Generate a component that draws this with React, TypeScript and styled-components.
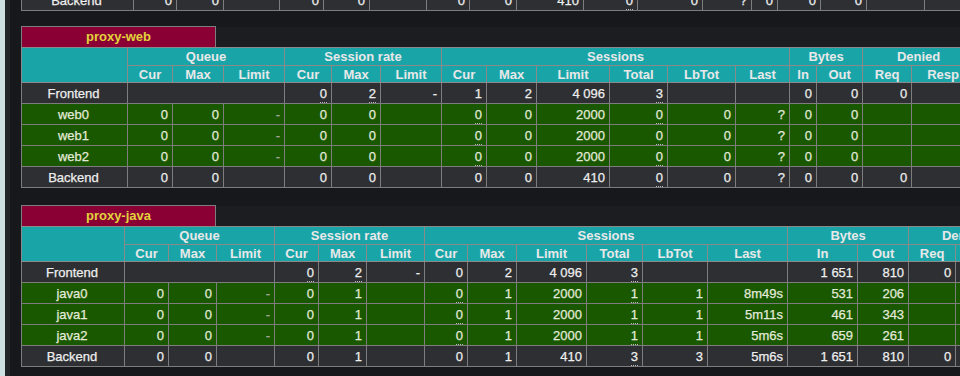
import React from "react";
import styled, { createGlobalStyle } from "styled-components";

const GlobalStyle = createGlobalStyle`
  html, body {
    margin: 0;
    padding: 0;
    background: #17181b;
    overflow: hidden;
  }
  body {
    font-family: "Liberation Sans", Arial, Helvetica, sans-serif;
  }
`;

const Page = styled.div`
  display: flex;
  width: 960px;
  height: 376px;
  overflow: hidden;
`;

const SideStrip = styled.div`
  flex: none;
  width: 5px;
  background: #cfe0e3;
`;

const SideEdge = styled.div`
  flex: none;
  width: 5px;
  background: #232427;
`;

const Content = styled.div`
  flex: 1;
  min-width: 0;
  padding-left: 11px;
  overflow: hidden;
  display: flex;
  flex-direction: column;
`;

const Clip = styled.div`
  height: 11px;
  overflow: hidden;
  display: flex;
  flex-direction: column;
  justify-content: flex-end;
  flex: none;
`;

const Block = styled.section<{ $gap: number }>`
  margin-top: ${({ $gap }) => $gap}px;
  flex: none;
`;

const TitleRow = styled.div`
  display: flex;
  height: 21px;
  width: 2000px;
`;

const Tab = styled.div`
  flex: none;
  width: 195px;
  box-sizing: border-box;
  background: #8a0034;
  border: 1px solid #7d7d7d;
  border-bottom: none;
  color: #e2d23c;
  font-weight: bold;
  font-size: 13px;
  line-height: 20px;
  text-align: center;
`;

const TabFiller = styled.div`
  flex: 1;
  background: #1c1d20;
  margin-top: 1px;
`;

const Table = styled.table`
  border-collapse: collapse;
  table-layout: fixed;
  font-size: 13px;
  border: 1px solid #7d7d7d;
`;

const Th = styled.th<{ $h: number }>`
  background: #19a5a8;
  color: #e8e8e8;
  font-weight: bold;
  font-size: 13px;
  height: ${({ $h }) => $h}px;
  padding: 0;
  border: 1px solid #8a8a8a;
  text-align: center;
  white-space: nowrap;
  overflow: hidden;
`;

const Tr = styled.tr<{ $kind: "front" | "server" | "back" }>`
  height: 21px;
  background: ${({ $kind }) => ($kind === "server" ? "#1a5800" : "#2d2f32")};
  color: ${({ $kind }) => ($kind === "server" ? "#e2ead9" : "#eeeeee")};
`;

const Td = styled.td<{ $name?: boolean; $dim?: boolean }>`
  padding: 0 4px 0 2px;
  border: 1px solid #7d7d7d;
  text-align: ${({ $name }) => ($name ? "center" : "right")};
  white-space: nowrap;
  overflow: hidden;
  -webkit-text-stroke: 0.25px currentColor;
  color: ${({ $dim }) => ($dim ? "#a3a89f" : "inherit")};
`;

const Tip = styled.u`
  text-decoration: none;
  border-bottom: 1px dotted #b9b9b9;
  padding-bottom: 1px;
`;

type Cell = string | { v: string; tip?: boolean; span?: number; dim?: boolean };
type Row = { kind: "front" | "server" | "back"; name: string; cells: Cell[] };

const t = (v: string): Cell => ({ v, tip: true });
const sp = (n: number): Cell => ({ v: "", span: n });
const dash: Cell = { v: "-", dim: true };

const groups: [string, number][] = [
  ["Queue", 3],
  ["Session rate", 3],
  ["Sessions", 6],
  ["Bytes", 2],
  ["Denied", 2],
  ["Errors", 3],
];

const subs = [
  "Cur", "Max", "Limit",
  "Cur", "Max", "Limit",
  "Cur", "Max", "Limit", "Total", "LbTot", "Last",
  "In", "Out",
  "Req", "Resp",
  "Req", "Conn", "Resp",
];

const webCols = [106, 45, 51, 61, 47, 49, 61, 45, 50, 73, 58, 68, 54, 27, 46, 49, 63, 50, 50, 50];
const javaCols = [103, 44, 48, 58, 44, 48, 58, 43, 49, 70, 56, 65, 80, 70, 51, 47, 63, 50, 50, 50];
const prevCols = [112, 43, 47, 56, 44, 46, 57, 43, 47, 67, 54, 65, 49, 26, 43, 46, 58, 50, 50, 50];

const webServer = (name: string): Row => ({
  kind: "server",
  name,
  cells: ["0", "0", dash, "0", "0", "", t("0"), "0", "2000", t("0"), "0", "?", "0", "0", "", "", "", "", ""],
});

const webRows: Row[] = [
  {
    kind: "front",
    name: "Frontend",
    cells: [sp(3), t("0"), t("2"), "-", "1", "2", "4 096", t("3"), "", "", "0", "0", "0", "", "", "", ""],
  },
  webServer("web0"),
  webServer("web1"),
  webServer("web2"),
  {
    kind: "back",
    name: "Backend",
    cells: ["0", "0", "", "0", "0", "", "0", "0", "410", t("0"), "0", "?", "0", "0", "0", "", "", "", ""],
  },
];

const javaServer = (name: string, last: string, bin: string, bout: string): Row => ({
  kind: "server",
  name,
  cells: ["0", "0", dash, "0", "1", "", t("0"), "1", "2000", t("1"), "1", last, bin, bout, "", "", "", "", ""],
});

const javaRows: Row[] = [
  {
    kind: "front",
    name: "Frontend",
    cells: [sp(3), t("0"), t("2"), "-", "0", "2", "4 096", t("3"), "", "", "1 651", "810", "0", "", "", "", ""],
  },
  javaServer("java0", "8m49s", "531", "206"),
  javaServer("java1", "5m11s", "461", "343"),
  javaServer("java2", "5m6s", "659", "261"),
  {
    kind: "back",
    name: "Backend",
    cells: ["0", "0", "", "0", "1", "", "0", "1", "410", t("3"), "3", "5m6s", "1 651", "810", "0", "", "", "", ""],
  },
];

const prevRows: Row[] = [
  {
    kind: "back",
    name: "Backend",
    cells: ["0", "0", "", "0", "0", "", "0", "0", "410", t("0"), "0", "?", "0", "0", "0", "", "", "", ""],
  },
];

const renderCell = (c: Cell, i: number) => {
  if (typeof c === "string") return <Td key={i}>{c}</Td>;
  return (
    <Td key={i} colSpan={c.span} $dim={c.dim}>
      {c.tip ? <Tip>{c.v}</Tip> : c.v}
    </Td>
  );
};

function StatsTable({ cols, rows, header = true }: { cols: number[]; rows: Row[]; header?: boolean }) {
  const width = cols.reduce((a, b) => a + b, 0);
  return (
    <Table style={{ width }}>
      <colgroup>
        {cols.map((w, i) => (
          <col key={i} style={{ width: w }} />
        ))}
      </colgroup>
      {header && (
        <thead>
          <tr>
            <Th $h={17} rowSpan={2} />
            {groups.map(([label, n]) => (
              <Th $h={17} key={label} colSpan={n}>
                {label}
              </Th>
            ))}
          </tr>
          <tr>
            {subs.map((s, i) => (
              <Th $h={16} key={i}>
                {s}
              </Th>
            ))}
          </tr>
        </thead>
      )}
      <tbody>
        {rows.map((r) => (
          <Tr key={r.name} $kind={r.kind}>
            <Td $name>{r.name}</Td>
            {r.cells.map(renderCell)}
          </Tr>
        ))}
      </tbody>
    </Table>
  );
}

function Proxy({ name, cols, rows, gap }: { name: string; cols: number[]; rows: Row[]; gap: number }) {
  return (
    <Block $gap={gap}>
      <TitleRow>
        <Tab>{name}</Tab>
        <TabFiller />
      </TitleRow>
      <StatsTable cols={cols} rows={rows} />
    </Block>
  );
}

export default function App() {
  return (
    <>
      <GlobalStyle />
      <Page>
        <SideStrip />
        <SideEdge />
        <Content>
          <Clip>
            <StatsTable cols={prevCols} rows={prevRows} header={false} />
          </Clip>
          <Proxy name="proxy-web" cols={webCols} rows={webRows} gap={15} />
          <Proxy name="proxy-java" cols={javaCols} rows={javaRows} gap={17} />
        </Content>
      </Page>
    </>
  );
}
